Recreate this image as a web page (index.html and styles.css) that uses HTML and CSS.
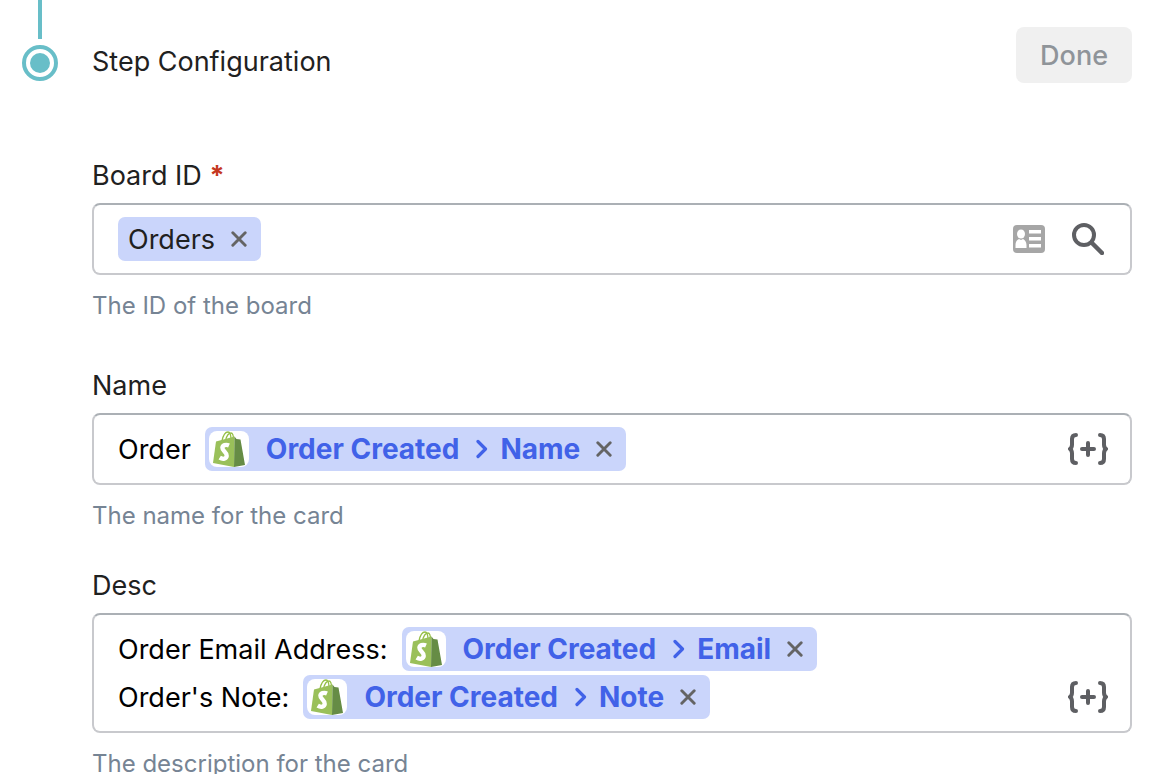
FILE: index.html
```html
<!DOCTYPE html>
<html lang="en">
<head>
  <meta charset="UTF-8" />
  <meta name="viewport" content="width=device-width, initial-scale=1.0" />
  <title>Step Configuration</title>
  <link rel="stylesheet" href="styles.css">
</head>
<body>
  <!-- shared icons -->
  <svg class="sprite" aria-hidden="true">
    <symbol id="icon-close" viewBox="0 0 16 16">
      <path d="M1.800 1.800l12.400 12.400M14.200 1.800L1.800 14.200" fill="none" stroke="currentColor" stroke-width="2.900" stroke-linecap="round" />
    </symbol>
    <symbol id="icon-chevron" viewBox="0 0 12 20">
      <path d="M2 2.500l7.500 7.500L2 17.500" fill="none" stroke="currentColor" stroke-width="3.200" stroke-linecap="round" stroke-linejoin="round" />
    </symbol>
    <symbol id="icon-braces" viewBox="0 0 40 32">
      <path d="M8 2C5 2 4 3.500 4 6v5.500C4 14 3.500 15 2 16c1.500 1 2 2 2 4.500V26c0 2.500 1 4 4 4M32 2c3 0 4 1.500 4 4v5.500c0 2.500.5 3.500 2 4.500-1.500 1-2 2-2 4.500V26c0 2.500-1 4-4 4M20 10v12M14 16h12" fill="none" stroke="currentColor" stroke-width="4" stroke-linecap="round" stroke-linejoin="round" />
    </symbol>
    <symbol id="icon-bag" viewBox="0 0 40 36">
      <path d="M13 10c1-5 3.500-9 6-9s3 4 3 8M16.500 9.500c1-4 3-7.500 5.500-7.500 2 0 2.500 3 2.500 7" fill="none" stroke="#95bf47" stroke-width="1.300" />
      <path d="M7 10.500l18.500-5L25 36 4 32z" fill="#9ac05a" />
      <path d="M25.500 5.500l2 2.500 4 .5L36 34l-11 2z" fill="#668c45" />
      <path d="M20 14.500c-3.200-1.400-6.400-.2-6.600 2.300-.2 3.300 4.700 4.300 4.300 8-.3 3-3.600 4-7 1.900" fill="none" stroke="#fff" stroke-width="4.400" />
    </symbol>
  </svg>

  <div class="step">
    <div class="rail">
      <span class="rail-line"></span>
      <span class="rail-dot"></span>
    </div>

    <form class="content">
      <div class="header">
        <h1>Step Configuration</h1>
        <button type="button" class="done" disabled>Done</button>
      </div>

      <div class="field field-lookup">
        <label for="boardId">Board ID <span class="required">*</span></label>
        <div class="box">
          <div class="lines">
            <div class="line">
              <span class="token token-plain">
                <span class="typed">Orders</span>
                <button type="button" class="remove" aria-label="Remove Orders"><svg><use href="#icon-close" /></svg></button>
              </span>
              <input type="text" id="boardId" />
            </div>
          </div>
          <div class="actions">
            <button type="button" class="action action-light" aria-label="Pick a record">
              <svg viewBox="0 0 32 28">
                <rect width="32" height="28" rx="4" fill="currentColor" />
                <g fill="#fff">
                  <ellipse cx="8" cy="9" rx="4" ry="4.500" />
                  <path d="M2.500 23v-3c0-3.500 2-5.500 3.500-6l2 1 2-1c1.500.5 3.500 2.500 3.500 6v3z" />
                  <path d="M16 5h12v3.500H16zM16 12h12v3.500H16zM16 19h12v3.500H16z" />
                </g>
              </svg>
            </button>
            <button type="button" class="action" aria-label="Search">
              <svg viewBox="0 0 32 32">
                <circle cx="12" cy="12" r="10" fill="none" stroke="currentColor" stroke-width="4" />
                <path d="M19.500 19.500l10.500 10.500" fill="none" stroke="currentColor" stroke-width="4.500" stroke-linecap="round" />
              </svg>
            </button>
          </div>
        </div>
        <p class="help">The ID of the board</p>
      </div>

      <div class="field">
        <label for="cardName">Name</label>
        <div class="box">
          <div class="lines">
            <div class="line">
              <span class="typed">Order</span>
              <span class="token">
                <svg class="app"><use href="#icon-bag" /></svg>
                Order Created
                <svg class="chevron"><use href="#icon-chevron" /></svg>
                Name
                <button type="button" class="remove" aria-label="Remove Name"><svg><use href="#icon-close" /></svg></button>
              </span>
              <input type="text" id="cardName" />
            </div>
          </div>
          <div class="actions">
            <button type="button" class="action" aria-label="Insert variable"><svg class="wide"><use href="#icon-braces" /></svg></button>
          </div>
        </div>
        <p class="help">The name for the card</p>
      </div>

      <div class="field">
        <label for="cardDesc">Desc</label>
        <div class="box">
          <div class="lines">
            <div class="line">
              <span class="typed">Order Email Address:</span>
              <span class="token">
                <svg class="app"><use href="#icon-bag" /></svg>
                Order Created
                <svg class="chevron"><use href="#icon-chevron" /></svg>
                Email
                <button type="button" class="remove" aria-label="Remove Email"><svg><use href="#icon-close" /></svg></button>
              </span>
            </div>
            <div class="line">
              <span class="typed">Order's Note:</span>
              <span class="token">
                <svg class="app"><use href="#icon-bag" /></svg>
                Order Created
                <svg class="chevron"><use href="#icon-chevron" /></svg>
                Note
                <button type="button" class="remove" aria-label="Remove Note"><svg><use href="#icon-close" /></svg></button>
              </span>
              <input type="text" id="cardDesc" />
            </div>
          </div>
          <div class="actions">
            <button type="button" class="action" aria-label="Insert variable"><svg class="wide"><use href="#icon-braces" /></svg></button>
          </div>
        </div>
        <p class="help">The description for the card</p>
      </div>
    </form>
  </div>
</body>
</html>
```
FILE: styles.css
```css
* {
  box-sizing: border-box;
}

body {
  margin: 0;
  background: #fff;
  color: #1f2121;
  font-family: Inter, "Liberation Sans", sans-serif;
  font-size: 27px;
  line-height: 42px;
}

h1,
p {
  margin: 0;
  font-weight: 400;
}

button,
input {
  font: inherit;
  border: none;
  padding: 0;
  background: none;
}

svg {
  display: block;
}

.sprite {
  display: none;
}

.step {
  display: flex;
  gap: 34px;
  padding: 0 18px 0 22px;
}

/* progress rail */
.rail {
  display: flex;
  flex-direction: column;
  align-items: center;
  gap: 6px;
}

.rail-line {
  width: 4px;
  height: 39px;
  background: #68bec8;
}

.rail-dot {
  width: 36px;
  height: 36px;
  border: 4px solid #68bec8;
  border-radius: 50%;
  padding: 4px;
  background: #68bec8 content-box;
}

.content {
  flex: 1;
  min-width: 0;
  padding: 27px 0;
}

.header {
  display: flex;
  justify-content: space-between;
  align-items: flex-end;
  margin-bottom: 72px;
}

h1 {
  font-size: 27px;
}

.done {
  height: 56px;
  padding: 2px 24px 0;
  border-radius: 8px;
  background: #f0f0f0;
  color: #8f9499;
  font-weight: 500;
}

/* fields */
.field {
  margin-bottom: 34px;
}

.field-lookup {
  margin-bottom: 44px;
}

label {
  display: block;
  margin-bottom: 6px;
}

.required {
  color: #c5381f;
  font-weight: 700;
}

.box {
  display: flex;
  align-items: flex-end;
  gap: 20px;
  padding: 10px 22px 10px 24px;
  border: 2px solid #c8c9cd;
  border-top-color: #abb0b5;
  border-radius: 8px;
}

.lines {
  flex: 1;
  min-width: 0;
}

.line {
  display: flex;
  align-items: center;
  gap: 14px;
  height: 48px;
}

.line input {
  flex: 1;
  min-width: 0;
  outline: none;
}

.typed {
  padding-top: 2px;
  color: #000;
  white-space: nowrap;
}

.token {
  display: flex;
  align-items: center;
  height: 44px;
  padding: 0 14px 0 4px;
  border-radius: 7px;
  background: #cad5fb;
  color: #4162e8;
  font-size: 28px;
  font-weight: 700;
  white-space: nowrap;
}

.token-plain {
  padding-left: 10px;
  font-size: 27px;
  font-weight: 400;
}

.token-plain .typed {
  color: #1f2121;
}

.app {
  width: 40px;
  height: 36px;
  margin-right: 17px;
  border-radius: 8px;
  background: #fff;
}

.chevron {
  width: 12px;
  height: 20px;
  margin: 0 12px 0 17px;
}

.remove {
  margin-left: 16px;
  color: #646464;
  cursor: pointer;
}

.remove svg {
  width: 16px;
  height: 16px;
}

.actions {
  display: flex;
  gap: 19px;
}

.action {
  display: flex;
  align-items: center;
  justify-content: center;
  width: 40px;
  height: 48px;
  color: #5e5f63;
  cursor: pointer;
}

.action-light {
  color: #a6a6a6;
}

.action svg {
  width: 32px;
  height: 32px;
}

.action svg.wide {
  width: 40px;
}

.help {
  margin-top: 16px;
  color: #768494;
  font-size: 24px;
  line-height: 30px;
}
```
